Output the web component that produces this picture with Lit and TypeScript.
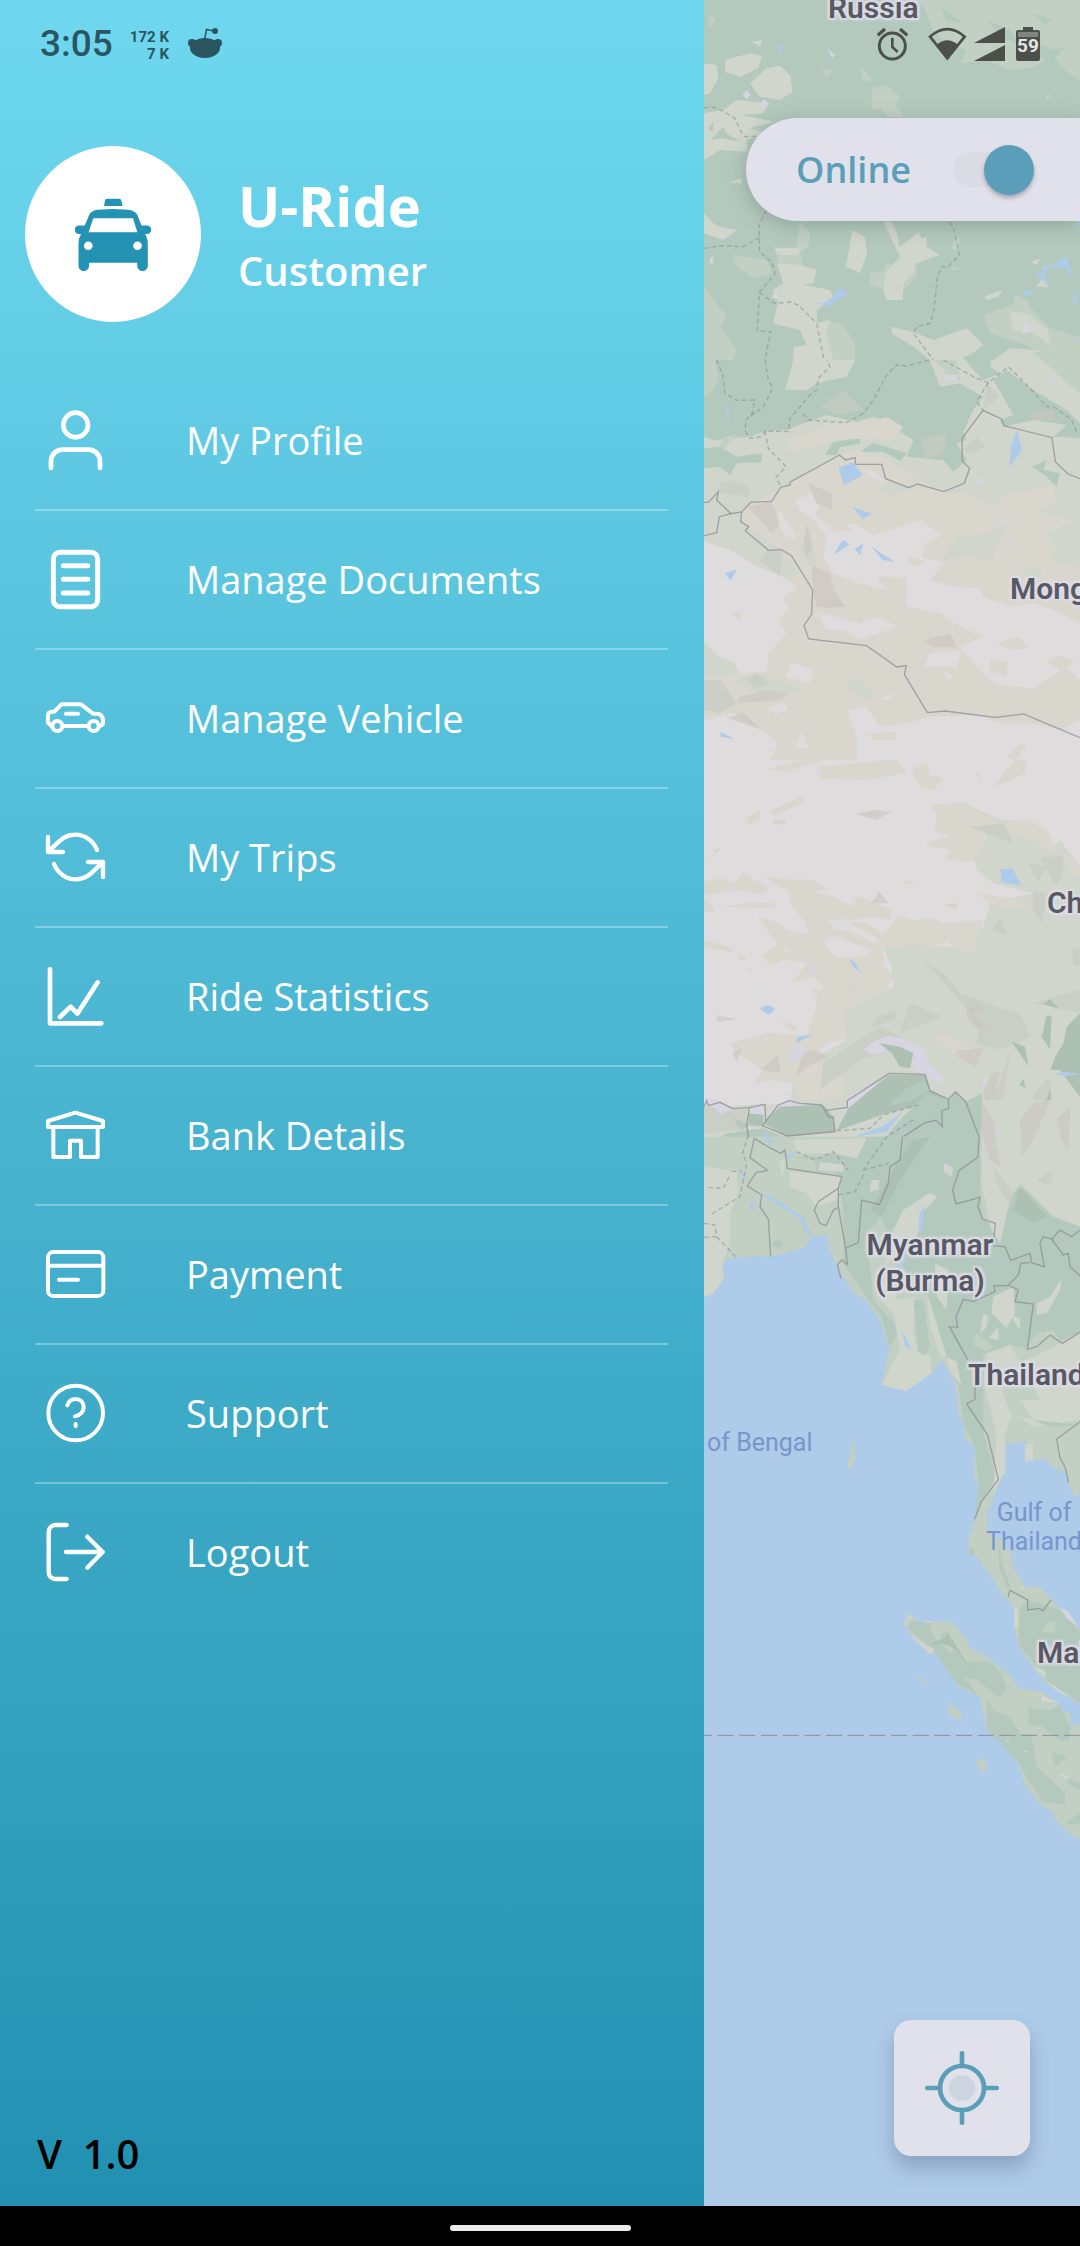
import { LitElement, html, css, svg, SVGTemplateResult } from "lit";
import { customElement, state } from "lit/decorators.js";

interface MenuItem {
  id: string;
  label: string;
  weight: number;
  icon: SVGTemplateResult;
}

/* Menu icons share a 192-unit square; weight is the stroke width in those units. */
const MENU: MenuItem[] = [
  {
    id: "profile",
    label: "My Profile",
    weight: 14,
    icon: svg`<circle cx="95" cy="51" r="37"/><path d="M21 180V159a34 34 0 0 1 34-34h79a34 34 0 0 1 34 34v21"/>`,
  },
  {
    id: "documents",
    label: "Manage Documents",
    weight: 15,
    icon: svg`<rect x="28" y="16" width="133" height="163" rx="20"/><path d="M58 56h73M58 97h73M58 138h73"/>`,
  },
  {
    id: "vehicle",
    label: "Manage Vehicle",
    weight: 12,
    icon: svg`<circle cx="40" cy="120" r="15"/><circle cx="149" cy="120" r="15"/><path d="M22 119L12 110V89Q12 77 24 77H31L52 55H111L147 83H156Q177 83 177 104V111Q177 117 168 120M59 120H131M66 83H102"/>`,
  },
  {
    id: "trips",
    label: "My Trips",
    weight: 13,
    icon: svg`<path d="M159 75C148 47 121 29 95 29C59 29 47 48 12 81M12 36V81H57M30 117C41 145 68 163 94 163C130 163 142 144 177 111M177 156V111H132"/>`,
  },
  {
    id: "statistics",
    label: "Ride Statistics",
    weight: 14,
    icon: svg`<path d="M18 16V178H172M48 159L80 128L100 149L161 55"/>`,
  },
  {
    id: "bank",
    label: "Bank Details",
    weight: 12,
    icon: svg`<path d="M12 54L94 29L177 54V72H12ZM28 72V162H78V113H111V162H161V72"/>`,
  },
  {
    id: "payment",
    label: "Payment",
    weight: 12,
    icon: svg`<rect x="12" y="30" width="166" height="132" rx="16"/><path d="M12 71H178M45 113H102"/>`,
  },
  {
    id: "support",
    label: "Support",
    weight: 12,
    icon: svg`<circle cx="95" cy="96" r="82"/><path d="M70 73C74 60 84 54 95 54C109 54 119 64 119 78C119 92 109 102 93 106M95 129V135"/>`,
  },
  {
    id: "logout",
    label: "Logout",
    weight: 13,
    icon: svg`<path d="M68 15H34A20 20 0 0 0 14 35V157A20 20 0 0 0 34 177H68M66 96H176M130 50L176 96L130 143"/>`,
  },
];

interface MapLabel {
  lines: string[];
  x: number;
  y: number;
  kind: "country" | "sea";
  centred?: boolean;
}

const LABELS: MapLabel[] = [
  { lines: ["Russia"], x: 124, y: -10, kind: "country" },
  { lines: ["Mongolia"], x: 306, y: 571, kind: "country" },
  { lines: ["China"], x: 343, y: 885, kind: "country" },
  { lines: ["Myanmar", "(Burma)"], x: 226, y: 1227, kind: "country", centred: true },
  { lines: ["Thailand"], x: 264, y: 1357, kind: "country" },
  { lines: ["Malaysia"], x: 333, y: 1635, kind: "country" },
  { lines: ["of Bengal"], x: 3, y: 1428, kind: "sea" },
  { lines: ["Gulf of", "Thailand"], x: 330, y: 1498, kind: "sea", centred: true },
];

/* Each tile is a band of the map: filled areas by class, then border lines. */
interface Tile {
  top: number;
  areas: [string, string[]][];
  borders: string[];
  provinces: string[];
}

const TILES: Tile[] = [
  {
    top: 0,
    areas: [
      ["forest", ["0,0 1140,0 1140,1080 0,1080"]],
      ["meadow", [
        "640,0 1140,0 1140,240 1100,215 1060,170 1000,200 930,210 860,180 780,190 800,150 740,130 700,90 670,20",
        "515,265 560,255 600,290 585,310 615,350 565,352 545,325 515,330",
        "12,860 80,950 60,980 110,1050 100,1080 12,1080",
        "300,665 330,700 325,740 300,755 310,800 240,800 225,750 290,740",
        "510,820 550,815 560,790 600,800 630,830 650,800 650,830 610,870 560,870 510,855",
        "480,195 515,240 490,245", "365,205 398,212 380,235", "25,50 45,55 35,80 25,75",
        "850,945 960,905 1000,930 1050,985 1140,1010 1140,1080 1050,1080 980,1035 930,1020 870,1000",
        "945,880 990,910 985,935 940,925", "750,745 775,705 780,730 765,750",
        "755,797 792,808 755,810", "100,765 200,780 215,820 160,835 110,800",
        "375,960 430,975 465,1030 465,1080 360,1080 350,1000",
      ]],
      ["forest", [
        "860,60 930,90 960,130 900,110", "980,110 1060,150 1100,140 1050,190 1000,160",
        "720,20 790,70 740,60", "1000,40 1060,60 1030,75",
      ]],
      ["steppe", [
        "200,205 240,197 270,225 278,275 240,300 180,290 150,250",
        "12,190 50,195 55,235 30,280 12,285",
        "75,180 150,160 185,168 175,205 120,230 75,215",
        "155,125 185,120 180,140",
        "12,340 70,330 110,300 205,310 190,340 120,345 225,365 150,385 200,400 140,420 140,455 60,450 12,480",
        "550,665 575,665 590,700 598,740 640,710 655,695 665,715 680,710 680,740 718,765 650,790 640,820 610,850 608,900 560,900 550,870 555,820 600,770",
        "457,690 495,712 502,760 480,818 437,800 447,750",
        "225,745 300,745 295,765 240,765",
        "230,790 300,795 350,810 340,850 310,855 390,870 400,890 350,930 352,970 390,960 380,1000 400,1080 280,1080 280,1040 320,1035 300,990 220,970 235,900 220,870 250,850",
        "12,640 40,670 60,680 110,690 70,720 12,700",
        "575,980 650,1000 700,1020 800,985 850,1035 790,1080 690,1080 640,1040 575,1000",
        "930,935 980,940 1040,985 1055,1040 1000,1000 940,990",
        "853,890 908,868 895,890 860,900", "1008,860 1030,832 1045,862", "992,785 1022,775 1010,796",
        "85,547 125,535 125,552", "880,1080 930,1045 1010,1050 1060,1080",
      ]],
      ["forest", ["25,385 42,362 38,395", "30,420 70,380 80,400 120,425 60,415"]],
      ["snow", [
        "128,285 140,270 152,285 140,298", "178,318 190,298 208,312 190,325", "382,145 404,165 396,175",
        "1040,290 1090,250 1045,285 1045,303", "965,1000 980,960 990,995", "225,740 245,752 228,755",
        "27,790 37,765 42,790", "215,890 230,868 232,900",
      ]],
      ["water", [
        "235,138 250,136 243,166", "342,913 385,905 425,860 443,886 410,900 388,920 370,913",
        "995,810 1030,825 1028,797 1050,800 1100,768 1120,830 1085,800 1040,808 1035,830 1048,860",
        "963,895 980,868 1000,880", "1122,865 1132,905 1120,912", "1110,1000 1140,1060 1130,1075", "1125,662 1140,662 1140,680",
      ]],
    ],
    borders: [],
    provinces: [
      "12,323 50,323 105,355 120,390 135,410 175,408",
      "200,630 178,670 178,755 215,785 225,820 178,878 172,993 212,995 195,1080",
      "12,745 60,737 100,738 125,742 178,713",
      "178,878 225,910 270,906 295,915 350,970 372,1080",
      "750,665 765,700 778,765 745,800 725,800 712,830 702,930 690,970 650,980 640,1000 700,1080",
    ],
  },
  {
    top: 1080,
    areas: [
      ["steppe", ["0,0 1140,0 1140,1200 0,1200"]],
      ["forest", [
        "12,0 280,0 255,90 320,90 350,70 440,50 465,0 690,0 720,80 780,70 850,110 820,150 790,215 800,240 770,250 800,300 760,335 730,300 620,290 640,240 600,215 570,185 520,170 470,185 380,165 310,190 260,210 190,215 150,230 40,240 12,230",
        "12,265 60,260 110,290 185,280 185,307 110,310 90,345 60,320 12,325",
        "375,285 400,245 480,235 480,250 420,262 410,285", "480,275 520,248 620,280 600,303 550,275 500,275",
        "880,60 920,30 1000,90 1100,150 1140,190 1140,235 1060,230 1100,195 1000,180 910,200 900,180 940,165",
        "730,150 740,115 790,115 800,135", "995,320 1040,300 1030,330 1080,340 1070,380 1040,350",
        "910,90 928,75 925,92", "790,-10 880,-30 870,20 900,40 850,60 820,30",
      ]],
      ["meadow", ["12,0 45,0 55,60 30,100 12,110", "700,0 770,0 780,60 740,40", "1000,-20 1140,-60 1140,100 1090,60 1050,20", "60,260 70,230 110,225 70,270"]],
      ["desert", [
        "265,240 390,195 500,185 560,172 610,200 575,240 430,235 400,245 270,275",
        "120,450 240,385 420,285 470,270 560,295 640,350 730,395 800,400 880,440 930,400 1060,380 1070,430 1000,450 1140,490 1140,1200 12,1200 12,540 130,590 240,660 300,640 230,560 140,500",
      ]],
      ["steppe", [
        "740,570 780,530 860,520 930,490 890,560 880,600 850,605 830,590 730,600",
        "1035,520 1140,480 1140,620 1050,605 1070,560", "960,640 1010,620 1030,640 1000,660",
        "530,390 570,360 620,390 580,410", "300,560 330,540 350,610 330,620",
        "12,850 60,890 115,915 110,940 60,950 12,955", "12,640 110,680 30,690",
        "430,975 470,950 525,1005 500,1020", "90,1155 170,1160 160,1175 90,1175",
        "100,960 170,940 300,985 270,1005 170,1000",
      ]],
      ["plain", [
        "12,545 90,570 170,620 230,640 270,665 290,680 245,720 270,740 235,780 260,820 205,880 200,935 120,940 100,905 60,890 12,850",
        "287,420 330,400 360,440 345,465 390,500 460,490 520,525 600,500 660,480 640,450 655,475 725,525 680,545 665,590 705,600 735,605 690,660 760,680 840,685 850,710 930,740 1000,730 1060,750 1140,790 1140,960 1100,920 1000,985 900,975 870,960 830,920 780,860 850,830 780,800 720,760 620,740 620,655 530,650 560,690 520,680 460,665 400,640 370,590 380,530 340,480 300,450",
        "350,755 480,790 540,770 590,800 480,840 430,810 380,810",
        "440,1050 500,1040 540,1100 620,1090 680,1070 830,1065 900,1090 1000,1090 1080,1110 1140,1080 1140,1200 470,1200 470,1130",
        "12,1080 100,1060 185,1110 235,1150 210,1200 12,1200", "690,880 785,870 770,920 670,920",
        "225,470 240,455 275,500 290,540 250,520", "200,1045 250,1030 265,1050 225,1062", "275,905 340,930 330,970 255,950",
        "540,1020 580,995 570,1020", "730,935 758,945 745,962", "480,320 520,335 560,370 510,350",
        "285,1165 305,1115 325,1165",
      ]],
      ["desert", [
        "620,590 680,605 640,620", "540,690 620,690 600,740 560,720", "870,900 920,905 920,950 870,930", "1040,905 1080,885 1125,905 1080,930",
        "890,850 960,830 985,865 930,870", "510,1120 590,1115 590,1140 520,1140", "380,510 430,490 460,510 400,515",
        "95,760 123,755 122,783", "965,1150 980,1155 945,1200 920,1190", "500,700 545,750 540,765 480,740",
      ]],
      ["ridge", [
        "335,615 390,640 400,690 435,740 350,742 340,690", "670,840 750,822 770,862 700,862",
        "325,370 395,400 398,450 350,430", "145,440 215,425 240,490 215,520 180,480",
        "320,490 340,560 320,590 310,560", "80,1075 130,1058 185,1110 130,1090", "370,745 420,720 435,740", "980,160 1060,150 1070,180 1000,180",
        "120,1010 200,990 265,1005 240,1020 110,1030",
      ]],
      ["hill", [
        "12,960 60,960 110,1030 60,1060 12,1050", "200,570 245,570 240,650 180,600", "60,370 90,360 145,380 145,410 60,400",
        "360,140 430,90 490,150 410,165", "660,240 740,220 730,280 680,300", "790,270 830,230 855,260 810,280",
        "140,960 170,940 210,970 170,985", "860,70 900,110 850,150",
      ]],
      ["snow", ["735,45 775,45 765,62 735,60", "1060,55 1070,65 1050,70", "820,370 840,352 855,370", "915,555 948,528 940,545", "870,510 940,470 950,475"]],
      ["water", [
        "415,323 458,307 489,345 432,375", "457,441 516,461 488,477", "401,584 428,540 450,553", "464,568 490,550 480,585",
        "513,558 550,584 585,605 548,600", "951,210 966,270 928,322 932,262", "75,640 110,628 92,662", "62,1116 102,1137 62,1130", "70,130 83,145 90,188",
      ]],
    ],
    borders: [
      "12,427 25,427 55,395 50,420 93,461 125,456 152,427 215,424 243,381 270,375 271,366 419,285 436,300 466,293 466,313 545,313 557,356 626,383 653,372 731,395 793,370 809,325 787,304 786,235 849,151 905,177 912,197 1056,233 1066,305 1104,342 1140,356",
      "12,527 50,518 58,470 93,461",
      "125,456 122,485 146,500 136,513 206,571 243,568 275,588 338,690 335,762 312,797 326,837 500,857 590,921 619,917 613,943 682,1058 735,1053 885,1072 971,1062 1140,1133",
    ],
    provinces: [
      "50,0 68,45 75,100 110,121 163,120 160,155 138,180 135,212 150,235 185,230 195,213 265,215 270,175 330,105 350,90 355,55 390,20 380,0",
      "195,0 205,60 218,85 190,140 150,170",
      "195,213 205,265 258,320 228,352 242,378",
      "310,160 325,180 440,188 490,160 520,120 560,45 590,15 620,18 690,0",
      "730,0 820,50 865,68 925,20 990,85 1040,140 1060,140 1115,180 1130,215",
      "865,68 848,95 830,125 849,151",
    ],
  },
  {
    top: 2280,
    areas: [
      ["plain", ["0,0 1140,0 1140,1100 0,1100"]],
      ["steppe", [
        "548,560 640,540 680,560 800,560 850,500 870,430 1000,400 880,370 830,330 820,290 860,230 790,150 785,125 900,180 940,180 1060,260 1080,240 1140,320 1140,1200 12,1200 12,1040 270,1030 280,960 330,900 440,840 420,755 530,705 580,680 575,620",
      ]],
      ["desert", [
        "690,135 785,128 900,190 830,205 855,230 820,305 735,298 755,270 690,260 680,245 755,230 705,215 710,165",
        "900,185 980,180 1040,205 1070,280 1000,240 940,220", "1090,280 1120,290 1140,330 1140,350 1110,350",
        "175,470 240,490 260,510 330,525 310,480 270,430 270,400 190,350 260,358 330,358 380,385 345,395 400,410 460,440 470,408 575,450 570,480 520,470 460,478 370,480 500,490 550,520 600,465 640,480 700,475 730,490 850,480 820,580 780,570 740,545 690,565 650,545 600,565 545,560 555,620 580,650 560,690 430,755 440,835 380,850 350,880 435,965 430,1010 300,1020 285,970 200,960 160,975 190,930 110,880 90,850 200,820 320,825 345,760 350,710 335,690 375,685 340,650 280,665 320,610 250,600 210,618 185,585 235,555 200,510",
        "12,365 60,355 100,370 130,335 165,360 210,385 185,405 120,390 12,405", "830,400 960,420 1000,435 920,450 870,430",
        "358,20 480,10 550,0 590,0 620,35 580,45 500,60 358,55", "640,25 680,10 690,45 733,55 700,90 665,85 640,50",
        "945,0 978,0 975,40 885,82 910,40", "205,155 300,112 320,122 220,168", "135,175 180,148 180,178 150,193",
        "200,28 300,0 370,0 260,35", "65,440 150,427 225,430 225,445", "12,540 100,565 100,578 12,560",
        "235,780 293,800 285,815", "605,360 648,365 625,374", "818,37 835,40 850,60", "115,585 145,595 120,600", "130,620 160,628 150,635",
        "690,820 740,825 830,880 820,910 760,880", "12,415 30,430 45,455 12,455", "12,305 60,265 40,290",
      ]],
      ["plain", ["368,545 400,525 460,550 515,570 500,590 410,592", "385,480 450,490 540,540 520,550 450,515 400,505", "250,560 268,565 260,585"]],
      ["steppe", ["735,435 770,428 770,448", "220,180 258,178 255,192 220,195", "35,270 62,262 50,278", "450,670 480,682 455,692"]],
      ["ridge", ["183,930 232,885 243,938", "285,950 310,880 345,870 387,890 330,915", "515,430 537,395 567,430", "465,162 525,150 575,155 527,180", "50,765 108,778 50,785", "97,875 125,865 110,905", "768,870 850,865 830,920 770,890"]],
      ["hill", [
        "598,820 630,728 727,772", "515,800 530,770 588,750 585,780", "665,595 740,650 780,700 960,765 990,830 900,870 830,850 835,810 800,745",
        "370,910 540,800 600,830 580,870 480,900 360,990", "985,310 1040,320 1015,365", "1020,292 1090,288 1085,355 1065,375",
        "810,200 910,190 942,253", "875,510 903,475 920,525", "1000,395 1045,400 1025,485 1000,450", "1118,568 1140,565 1140,620 1118,612",
        "860,1020 900,970 930,870 900,1100 870,1090", "1000,1000 1050,950 1060,1080 1000,1200 960,1190 1000,1100",
        "1060,1080 1110,1040 1140,1060 1120,1140 1080,1150", "1000,730 1080,705 1140,690 1140,760 1070,740",
        "12,1040 140,1050 140,1110 12,1120",
      ]],
      ["ridge", ["800,745 840,735 825,770 870,805 825,805 800,775", "875,940 900,935 880,1010 860,1040 850,1000"]],
      ["snow", [
        "490,870 510,850 560,828 610,835 670,865 690,915 737,955 715,970 640,930 630,885 580,870 520,885",
        "422,1058 450,1008 535,965 530,1000 460,1040", "12,1015 60,1020 95,1050 60,1062 40,1040", "150,1045 195,1033 190,1065 150,1060",
        "200,1060 265,1018 330,1033 260,1045 210,1060", "268,890 285,855 322,865 285,912", "322,630 347,617 347,640",
        "85,392 95,378 110,395", "880,1110 907,1120 890,1132", "842,990 855,950 862,965", "345,35 358,15 358,40",
      ]],
      ["darkforest", [
        "538,850 600,860 640,880 630,925 600,920 575,880", "1052,930 1065,890 1090,850 1100,800 1140,760 1140,1010 1080,930",
        "1025,830 1040,765 1055,770 1050,868", "935,845 975,860 985,918", "1032,1040 1050,990 1055,1030", "958,975 970,955 977,985",
        "1030,735 1048,717 1080,748 1040,735",
        "190,1090 240,1040 370,1035 400,1070 405,1115 260,1130", "145,1060 190,1065 190,1100 145,1095",
        "410,1112 445,1045 565,945 675,945 690,990 745,1020 740,1060 600,1090 640,1040 560,1060",
      ]],
      ["forest", [
        "12,1160 80,1120 190,1105 260,1135 300,1200 12,1200", "600,1080 680,1000 745,1020 767,996 797,1025 845,1000 848,1050 838,1200 500,1200",
        "100,1075 150,1095 120,1110", "855,1040 860,1010 880,1038", "560,1040 620,985 670,960 690,990 640,1020",
      ]],
      ["water", [
        "902,328 938,327 963,376 904,367", "447,595 465,608 484,638 460,622", "177,745 205,735 225,747 208,765",
        "291,832 337,822 292,850", "455,1133 545,1100 605,1060 560,1110", "1065,942 1095,935 1140,943 1100,948", "195,1110 218,1155 200,1145",
      ]],
    ],
    borders: [
      "12,1040 20,1022 25,1037 60,1027 98,1046 148,1043 195,1033 197,1085",
      "187,1097 235,1035 268,1022 300,1030 365,1035 385,1070 400,1073 405,1115 262,1128 187,1097",
      "375,1052 442,1042 442,1022 567,940 675,943 690,992 745,1017 767,996 797,1025 838,1133",
      "745,1017 746,1045 725,1052 727,1100 708,1081 675,1088 607,1132",
      "148,1043 140,1095 147,1140 70,1146 12,1140",
    ],
    provinces: ["410,1112 510,1105 550,1065 655,1035"],
  },
  {
    top: 3300,
    areas: [
      ["meadow", [
        "12,110 1140,110 1140,1180 1122,1192 1095,1118 1062,1105 1035,1078 973,1083 980,1025 917,1030 915,1115 905,1130 862,1240 862,1290 905,1320 932,1355 940,1405 975,1460 1020,1460 1080,1525 1140,1590 1140,1812 1050,1760 1005,1710 957,1640 942,1580 942,1520 917,1495 825,1362 808,1370 806,1320 826,1250 835,1150 822,1136 826,1045 792,1012 792,975 775,938 768,860 725,778 698,820 675,808 672,835 620,873 600,855 590,868 545,855 568,748 541,665 500,603 460,578 412,500 390,455 381,408 335,408 312,443 212,470 165,468 88,477 65,495 72,535 38,583 12,590",
        "455,1030 466,1032 460,1100 442,1108",
      ]],
      ["forest", [
        "260,170 350,180 500,110 600,110 838,110 843,290 848,358 886,380 940,260 1000,270 1060,340 1140,380 1140,700 1080,720 1060,690 1010,700 980,745 930,735 880,770 850,760 850,1000 890,1130 845,1200 826,1250 835,1150 826,1045 792,975 775,860 740,770 720,740 690,600 660,560 590,480 560,400 545,350 500,400 520,600 600,690 570,745 545,650 500,590 430,490 430,330 415,230 350,170",
        "215,435 230,418 255,425 240,447", "22,460 45,443 35,470", "340,170 440,170 440,220 350,215",
      ]],
      ["darkforest", ["510,330 560,250 600,170 640,120 690,110 600,240 545,350", "940,330 960,260 1040,350 1000,370"]],
      ["steppe", [
        "12,200 110,215 115,280 90,340 90,430 70,480 65,495 72,535 38,583 12,590",
        "280,120 500,115 470,175 400,160 290,160", "270,215 425,228 410,300 350,320 320,280 270,260", "360,185 430,195 430,215 355,212",
        "590,370 610,330 690,278 712,290 660,345 655,400 600,460 550,500 590,600 645,590 640,700 655,760 690,765 695,820 620,873 545,855 600,750 580,640 540,600 560,430",
        "845,0 1140,0 1140,380 1060,350 1000,290 960,250 930,300 900,430 870,380 845,250",
        "880,590 940,560 945,640 920,685 875,640", "735,195 760,200 755,230 730,215", "705,490 745,510 740,630 710,590",
        "850,640 865,650 860,680 840,700", "930,645 960,655 960,690", "865,715 895,680 895,720",
        "740,770 770,785 785,860 750,810", "860,760 930,735 960,790 1040,750 1140,700 1140,960 1000,980 940,940 915,1000 915,1110 880,1180 890,1000 850,850",
        "1010,610 1050,590 1085,535 1080,570 1040,640 1010,645", "515,240 538,240 535,270 508,275", "240,185 258,175 245,238",
        "680,580 700,640 740,770 720,760 690,680",
      ]],
      ["meadow", ["900,850 1000,860 1020,900 960,900 1000,960 930,940", "830,700 880,740 860,755 820,735", "120,330 160,300 205,360 205,460 130,465", "970,910 985,940 960,960"]],
      ["forest", ["640,600 670,600 690,740 672,768 655,755", "1000,960 1090,970 1140,975 1050,980"]],
      ["ridge", [
        "845,0 880,60 900,200 870,180 845,100", "960,60 1000,10 1050,0 1000,120 965,170", "1070,60 1110,20 1105,150 1085,120",
        "1028,240 1050,212 1040,240",
      ]],
      ["hill", ["880,200 940,280 930,320 890,250", "1010,240 1060,210 1050,260"]],
      ["snow", ["730,190 745,195 740,215", "895,890 908,935 898,930", "885,90 905,98 890,112", "718,740 730,775 722,765", "1040,695 1050,705 1042,712"]],
      ["water", [
        "165,272 240,305 310,350 335,408 318,400 300,355", "658,340 675,315 664,398 656,395", "605,695 620,715 634,752 615,735",
        "118,215 127,212 135,245", "158,288 162,335 147,328", "457,112 545,85 605,40 560,95", "262,165 300,152 262,180", "585,505 620,472 600,505", "195,90 218,135 200,125",
      ]],
    ],
    borders: [
      "838,110 833,172 777,212 758,270 768,312 840,292 833,318 848,358 886,370 880,437 915,440 932,481 990,460 995,488 1033,500 1020,430 1030,410 1055,417 1080,390 1115,410 1140,390",
      "163,115 200,138 243,160 255,150 262,205 425,230 415,265 355,305 343,330 360,370 378,377 400,330 415,322",
      "163,115 150,173 203,211 168,218 142,258 185,285 180,320 205,358 212,470",
      "415,265 415,322 437,445 475,428 485,300 538,314 565,250 570,200 600,180 607,112",
      "437,445 442,493 425,480 412,495 423,535",
      "990,487 962,490 955,525 925,555 955,570 945,605 1000,612 982,748 1010,740 1050,705 1087,730 1140,697",
      "925,557 882,557 885,575 820,605 790,598 768,650 773,682 748,680 803,778",
      "825,855 825,898 800,912 862,1003 895,1138 845,1203 824,1258",
      "1055,417 1090,465 1105,460 1110,500 1140,527",
      "1140,965 1070,1018 1080,1075 1095,1100 1106,1147",
    ],
    provinces: [
      "145,105 128,160 140,190 120,290 30,345", "290,155 345,180 400,155 445,210", "12,370 45,375 50,410 12,412",
      "50,410 107,470", "490,210 565,190", "490,225 465,275 415,285", "95,215 125,213", "25,262 70,265 90,225", "640,60 560,110 490,210",
    ],
  },
  {
    top: 4350,
    areas: [
      ["meadow", [
        "625,490 655,513 755,515 803,570 805,590 860,620 935,680 955,715 1025,725 1080,762 1090,790 1108,785 1113,832 1140,820 1140,1170 1100,1145 1062,1105 1060,1088 1015,1060 975,1005 957,945 905,880 900,855 862,840 853,800 838,740 768,705 768,675 745,665 710,615 690,612 635,560 610,517",
        "645,681 670,685 687,705", "743,757 783,790 783,815 748,795", "826,937 848,922 866,958 846,966",
      ]],
      ["forest", [
        "620,530 640,510 690,520 700,560 745,545 770,600 800,635 870,635 900,665 920,715 895,745 870,720 830,690 790,680 838,740 768,700 745,665 710,615",
        "860,745 880,780 935,805 960,850 995,855 1010,950 1050,985 1095,1030 1095,1065 1030,1055 985,990 960,945 905,880 860,840",
        "985,775 1050,780 1080,765 1090,790 1113,832 1105,875 1075,870 1030,830 985,825",
        "957,480 985,450 1050,470 1080,480 1140,545 1140,760 1040,690 1000,640 957,585",
        "895,270 910,350 932,410 920,415 897,350", "805,290 826,300 822,312 808,320",
        "1055,905 1105,920 1065,950", "1110,985 1140,1000 1140,1020 1105,1000", "1095,1120 1140,1090 1140,1125",
      ]],
      ["meadow", ["1025,545 1045,515 1068,515 1065,550", "730,590 755,580 758,612", "695,530 720,530 725,570 705,570"]],
      ["steppe", ["942,470 955,480 955,535 942,530", "1005,650 1035,660 1040,680 1010,665", "975,-15 1000,-20 1000,30 975,35", "895,0 917,0 915,70 900,80", "630,555 705,600 690,612"]],
      ["darkforest", ["725,575 745,550 820,670 770,600", "690,585 730,565 760,575"]],
      ["snow", [
        "622,508 632,492 634,500", "670,514 695,514 690,518", "1025,725 1032,742 1080,760 1025,752", "1080,472 1105,485 1135,530 1100,505",
        "1050,700 1108,742 1070,722", "915,878 930,858 925,872", "955,903 982,903 980,906", "1078,973 1107,978 1095,986", "955,410 970,412 968,420", "940,468 962,487 958,485",
      ]],
    ],
    borders: ["924,442 930,421 983,450 983,480 1020,475 1028,483 1053,450"],
    provinces: [],
  },
];

@customElement("map-canvas")
export class MapCanvas extends LitElement {
  static styles = css`
    :host {
      display: block;
      overflow: hidden;
      background: #aecbe9;
    }
    .terrain {
      display: block;
      width: 100%;
      height: 100%;
    }
    .forest { fill: #b4c9bd; }
    .darkforest { fill: #acc0b4; }
    .meadow { fill: #c2d0c4; }
    .steppe { fill: #d0d6cc; }
    .desert { fill: #d9d6cd; }
    .plain { fill: #dedcdd; }
    .hill { fill: #c6ccc3; opacity: 0.7; }
    .ridge { fill: #c9c5bf; opacity: 0.6; }
    .snow { fill: #d6d5e1; }
    .water { fill: #aecbe9; }
    .border {
      fill: none;
      stroke: #8d8d96;
      stroke-opacity: 0.75;
      stroke-width: 4;
    }
    .province {
      fill: none;
      stroke: #8d8d96;
      stroke-opacity: 0.6;
      stroke-width: 4;
      stroke-dasharray: 14 9;
    }
    .equator {
      fill: none;
      stroke: #96889f;
      stroke-width: 3;
      stroke-dasharray: 48 17;
    }
    .label {
      position: absolute;
      white-space: nowrap;
      font-family: Roboto, "Liberation Sans", sans-serif;
      text-align: center;
    }
    .centred { transform: translateX(-50%); }
    .line { display: block; }
    .country {
      font-size: 30px;
      line-height: 36px;
      font-weight: 600;
      color: #585963;
      text-shadow: 0 0 3px #dcdce6, 0 0 3px #dcdce6, 2px 2px 2px #dcdce6, -2px -2px 2px #dcdce6,
        2px -2px 2px #dcdce6, -2px 2px 2px #dcdce6;
    }
    .sea {
      font-size: 25px;
      line-height: 29px;
      color: #7896cc;
    }
  `;

  render() {
    return html`
      <svg class="terrain" viewBox="12 0 1128 6618" preserveAspectRatio="xMinYMin slice" aria-hidden="true">
        ${TILES.map(
          (tile) => svg`<g transform="translate(0 ${tile.top})">
            ${tile.areas.map(([kind, shapes]) =>
              shapes.map((points) => svg`<polygon class=${kind} points=${points}/>`)
            )}
            ${tile.provinces.map((points) => svg`<polyline class="province" points=${points}/>`)}
            ${tile.borders.map((points) => svg`<polyline class="border" points=${points}/>`)}
          </g>`
        )}
        <path class="equator" d="M-12 5206H1140" />
      </svg>
      ${LABELS.map(
        (label) => html`<div
          class="label ${label.kind} ${label.centred ? "centred" : ""}"
          style="left:${label.x}px;top:${label.y}px"
        >
          ${label.lines.map((line) => html`<span class="line">${line}</span>`)}
        </div>`
      )}
    `;
  }
}

@customElement("app-root")
export class AppRoot extends LitElement {
  @state() private online = true;

  static styles = css`
    :host {
      display: block;
      font-family: "Open Sans", "Noto Sans", sans-serif;
    }
    * { box-sizing: border-box; }
    .screen {
      position: relative;
      display: flex;
      flex-direction: column;
      min-height: 100vh;
      overflow: hidden;
    }
    .content {
      flex: 1;
      display: grid;
      grid-template-columns: minmax(0, 704fr) minmax(0, 376fr);
    }

    .status {
      position: absolute;
      top: 0;
      left: 0;
      right: 0;
      height: 88px;
      padding: 0 40px;
      display: flex;
      align-items: center;
      color: #2b5560;
      z-index: 2;
    }
    .clock {
      font: 500 37px/44px Roboto, "Liberation Sans", sans-serif;
    }
    .speed {
      display: flex;
      flex-direction: column;
      margin-left: 17px;
      padding-top: 4px;
      text-align: right;
      font: 700 15px/17px Roboto, "Liberation Sans", sans-serif;
    }
    .alien { margin-left: 19px; display: block; }
    .indicators {
      display: flex;
      align-items: center;
      margin-left: auto;
      color: #4b504a;
    }
    .indicators svg { display: block; }
    .alarm { margin-right: 20px; }
    .wifi { margin-right: 7px; }
    .signal { margin-right: 11px; }
    .battery {
      display: flex;
      flex-direction: column;
      align-items: center;
    }
    .battery::before {
      content: "";
      width: 10px;
      height: 3px;
      background: #4b504a;
    }
    .level {
      width: 24px;
      height: 31px;
      border-radius: 2px;
      background: linear-gradient(#7f867e 0 5px, #4b504a 5px);
      border: 2px solid #4b504a;
      display: flex;
      align-items: center;
      justify-content: center;
      color: #e3e6e2;
      font: 700 19px/24px Roboto, "Liberation Sans", sans-serif;
    }

    .drawer {
      display: flex;
      flex-direction: column;
      background: linear-gradient(#6fd8f0, #2291b1);
      color: #fff;
    }
    .account {
      display: flex;
      align-items: center;
      gap: 37px;
      padding: 146px 24px 0 25px;
    }
    .avatar {
      flex: none;
      width: 176px;
      height: 176px;
      border-radius: 50%;
      background: #fff;
      display: flex;
      align-items: center;
      justify-content: center;
    }
    .name {
      margin: 0;
      font-size: 56px;
      line-height: 74px;
      font-weight: 700;
    }
    .role {
      margin: 0;
      font-size: 40px;
      line-height: 58px;
      font-weight: 600;
    }
    .menu {
      list-style: none;
      margin: 50px 0 0;
      padding: 0 36px 0 35px;
    }
    .entry + .entry { border-top: 2px solid rgba(255, 255, 255, 0.3); }
    .link {
      display: flex;
      align-items: center;
      gap: 78px;
      padding: 36px 0 37px 9px;
      color: inherit;
      text-decoration: none;
      font-size: 38px;
      line-height: 52px;
    }
    .glyph {
      flex: none;
      width: 64px;
      height: 64px;
      fill: none;
      stroke: currentColor;
      stroke-linecap: round;
      stroke-linejoin: round;
    }
    .version {
      margin: auto 0 0;
      padding: 0 37px 25px;
      color: #000;
      font-size: 40px;
      line-height: 54px;
      font-weight: 600;
      white-space: pre;
    }

    .map {
      position: relative;
      display: flex;
      flex-direction: column;
      justify-content: space-between;
      align-items: flex-end;
      padding: 118px 0 50px;
      overflow: hidden;
    }
    .canvas {
      position: absolute;
      inset: 0;
    }
    .availability {
      position: relative;
      display: flex;
      align-items: center;
      gap: 42px;
      height: 103px;
      padding: 0 46px 0 50px;
      border-radius: 52px 0 0 52px;
      background: #e0e1ea;
      box-shadow: 0 4px 20px rgba(60, 80, 70, 0.3);
      color: #5b9eba;
      font-size: 36px;
      line-height: 50px;
      font-weight: 600;
    }
    .switch {
      appearance: none;
      margin: 0;
      width: 81px;
      height: 35px;
      border-radius: 18px;
      background: #dbdbe4;
      display: flex;
      align-items: center;
    }
    .switch::before {
      content: "";
      flex: none;
      width: 50px;
      height: 50px;
      border-radius: 50%;
      background: #9aa5b0;
      box-shadow: 0 3px 4px rgba(0, 0, 0, 0.25);
    }
    .switch:checked { justify-content: flex-end; }
    .switch:checked::before { background: #5b9eba; }
    .locate {
      position: relative;
      width: 136px;
      height: 136px;
      margin: 0 50px 0 0;
      padding: 0;
      border: 0;
      border-radius: 17px;
      background: #e0e1ea;
      box-shadow: 0 12px 20px rgba(60, 70, 100, 0.3);
      display: flex;
      align-items: center;
      justify-content: center;
    }

    .gesture {
      height: 40px;
      background: #000;
      display: flex;
      align-items: center;
      justify-content: center;
    }
    .handle {
      width: 181px;
      height: 6px;
      margin-top: 4px;
      border-radius: 3px;
      background: #ececec;
    }
  `;

  private onToggle(event: Event) {
    this.online = (event.target as HTMLInputElement).checked;
  }

  private renderStatus() {
    return html`
      <div class="status">
        <span class="clock">3:05</span>
        <span class="speed"><span>172 K</span><span>7 K</span></span>
        <svg class="alien" width="34" height="32" viewBox="0 0 34 32" fill="currentColor" aria-hidden="true">
          <ellipse cx="17" cy="20" rx="15" ry="10" />
          <circle cx="4" cy="15" r="4" />
          <circle cx="30" cy="15" r="4" />
          <circle cx="27" cy="3" r="3" />
          <path d="M16.500 12L18.500 1.500L26 3" fill="none" stroke="currentColor" stroke-width="1.500" />
        </svg>
        <div class="indicators">
          <svg class="alarm" width="31" height="34" viewBox="0 0 93 102" fill="none" stroke="currentColor" stroke-width="9" aria-hidden="true">
            <circle cx="46" cy="57" r="39" />
            <path d="M46 33V60L62 75" stroke-width="8" />
            <path d="M2 25L24 6M91 25L69 6" stroke-width="10" />
          </svg>
          <svg class="wifi" width="39" height="34" viewBox="0 0 117 102" aria-hidden="true">
            <path d="M58 94L6 29Q58 -16 110 29Z" fill="none" stroke="currentColor" stroke-width="8" />
            <path d="M58 99L26 53Q58 26 90 53Z" fill="currentColor" />
          </svg>
          <svg class="signal" width="31" height="34" viewBox="0 0 93 102" fill="currentColor" aria-hidden="true">
            <path d="M93 0V48H0ZM93 54V102H0Z" />
          </svg>
          <div class="battery"><span class="level">59</span></div>
        </div>
      </div>
    `;
  }

  render() {
    return html`
      <div class="screen">
        ${this.renderStatus()}
        <div class="content">
          <aside class="drawer">
            <header class="account">
              <div class="avatar">
                <svg width="76" height="73" viewBox="0 0 76 73" fill="#2392b3" fill-rule="evenodd" aria-hidden="true">
                  <path d="M29 8L30 2.500Q30.300 .8 32 .8H44Q46 .8 46.300 2.500L47.600 8Z" />
                  <path
                    d="M38 11Q50 11 57 12.500Q61 14 62.500 17.500L66.500 27.500H72A4 4 0 0 1 72 36H70Q72.800 40 72.800 46V68A5.200 5 0 0 1 62.200 68V64.700H14V68A5.200 5 0 0 1 3.500 68V46Q3.500 40 6 36H4A4 4 0 0 1 4 27.500H9.700L14 17.500Q15.500 14 19 12.500Q26 11 38 11ZM18.300 20.300H58L62.400 34.300H13.500ZM9 47.700A4.300 4.300 0 0 0 17.600 47.700A4.300 4.300 0 0 0 9 47.700ZM58.200 47.700A4.300 4.300 0 0 0 66.800 47.700A4.300 4.300 0 0 0 58.200 47.700Z"
                  />
                </svg>
              </div>
              <div>
                <h1 class="name">U-Ride</h1>
                <p class="role">Customer</p>
              </div>
            </header>
            <nav aria-label="Main">
              <ul class="menu">
                ${MENU.map(
                  (item) => html`<li class="entry">
                    <a class="link" href="#${item.id}">
                      <svg class="glyph" viewBox="0 0 192 192" stroke-width=${item.weight} aria-hidden="true">${item.icon}</svg>
                      <span>${item.label}</span>
                    </a>
                  </li>`
                )}
              </ul>
            </nav>
            <p class="version">V  1.0</p>
          </aside>
          <main class="map">
            <map-canvas class="canvas"></map-canvas>
            <label class="availability">
              <span>${this.online ? "Online" : "Offline"}</span>
              <input class="switch" type="checkbox" role="switch" .checked=${this.online} @change=${this.onToggle} />
            </label>
            <button class="locate" type="button" aria-label="Centre on my location">
              <svg width="80" height="80" viewBox="0 0 240 240" fill="none" stroke="#5b9eba" stroke-width="14" stroke-linecap="round" aria-hidden="true">
                <circle cx="120" cy="120" r="39" fill="#cdd5e1" stroke="none" />
                <circle cx="120" cy="120" r="66" />
                <path d="M120 54V16M120 186V224M54 120H16M186 120H224" />
              </svg>
            </button>
          </main>
        </div>
        <footer class="gesture"><span class="handle"></span></footer>
      </div>
    `;
  }
}
